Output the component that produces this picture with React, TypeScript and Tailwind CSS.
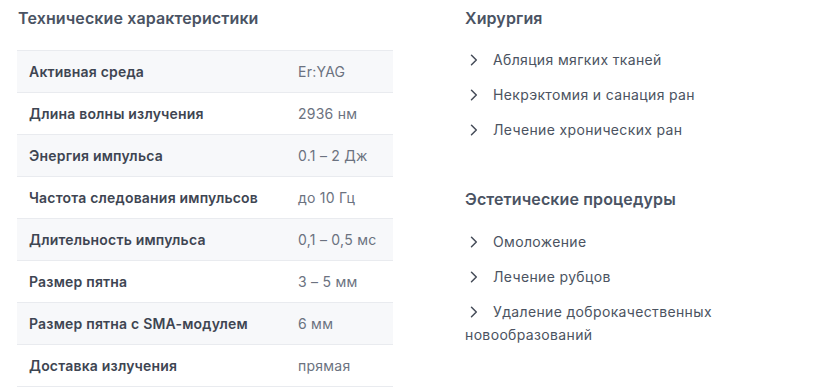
import React from "react";

const specs: [string, string][] = [
  ["Активная среда", "Er:YAG"],
  ["Длина волны излучения", "2936 нм"],
  ["Энергия импульса", "0.1 – 2 Дж"],
  ["Частота следования импульсов", "до 10 Гц"],
  ["Длительность импульса", "0,1 – 0,5 мс"],
  ["Размер пятна", "3 – 5 мм"],
  ["Размер пятна с SMA-модулем", "6 мм"],
  ["Доставка излучения", "прямая"],
];

const groups: { title: string; items: string[] }[] = [
  {
    title: "Хирургия",
    items: ["Абляция мягких тканей", "Некрэктомия и санация ран", "Лечение хронических ран"],
  },
  {
    title: "Эстетические процедуры",
    items: ["Омоложение", "Лечение рубцов", "Удаление доброкачественных новообразований"],
  },
];

function Chevron() {
  return (
    <svg
      width="9"
      height="12"
      viewBox="0 0 9 12"
      className="inline-block align-[-1px] ml-[4px] mr-[15px]"
      fill="none"
      stroke="#454c58"
      strokeWidth="1.5"
      strokeLinecap="round"
      strokeLinejoin="round"
    >
      <path d="M2.5 1.2 L7.3 6 L2.5 10.8" />
    </svg>
  );
}

export default function App() {
  return (
    <div
      className="w-[814px] h-[387px] bg-white overflow-hidden flex pl-[17px] pt-[6px] gap-[72px]"
      style={{ fontFamily: "Inter, 'Noto Sans', sans-serif" }}
    >
      <div className="w-[376px] shrink-0">
        <h2 className="text-[16px] leading-6 font-semibold tracking-[0.12px] text-[#4a5363] pl-[1px]">
          Технические характеристики
        </h2>
        <div className="mt-[20px] border-t border-[#e9ebef]">
          {specs.map(([k, v], i) => (
            <div
              key={k}
              className={`flex h-[42px] items-center border-b border-[#e9ebef] ${
                i % 2 === 0 ? "bg-[#f7f8fa]" : "bg-white"
              }`}
            >
              <div className="w-[281px] pl-[12px] text-[14px] font-semibold tracking-[0.2px] text-[#3e4552]">
                {k}
              </div>
              <div className="text-[14px] tracking-[0.25px] text-[#6b7280]">{v}</div>
            </div>
          ))}
        </div>
      </div>
      <div className="w-[262px] shrink-0">
        {groups.map((g, gi) => (
          <div key={g.title} className={gi > 0 ? "mt-[46px]" : ""}>
            <h3 className="text-[16px] leading-6 font-semibold tracking-[0.12px] text-[#4a5363]">{g.title}</h3>
            <ul className={`flex flex-col gap-[12px] ${gi > 0 ? "mt-[19px]" : "mt-[18px]"}`}>
              {g.items.map((it) => (
                <li key={it} className="text-[14px] leading-[23px] tracking-[0.35px] text-[#4b5361]">
                  <Chevron />
                  {it}
                </li>
              ))}
            </ul>
          </div>
        ))}
      </div>
    </div>
  );
}
